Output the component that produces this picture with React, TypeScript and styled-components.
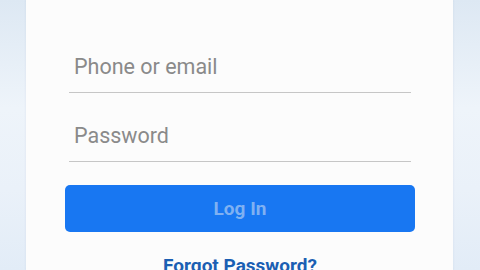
import React from "react";
import styled, {createGlobalStyle} from "styled-components";

const GlobalStyle = createGlobalStyle`
  html, body {
    margin: 0;
    padding: 0;
  }
  body {
    font-family: Roboto, "Liberation Sans", sans-serif;
    overflow: hidden;
  }
`

const PageDiv = styled.div`
  width: 480px;
  height: 270px;
  overflow: hidden;
  background: linear-gradient(180deg, #dde8f3 0%, #eef4fa 40%, #eaf1f9 70%, #e2ecf7 100%);
  display: flex;
`

const CardDiv = styled.div`
  margin-left: 26px;
  width: 427px;
  height: 100%;
  background: #fcfcfc;
  box-shadow: 0 0 2px rgba(120, 140, 170, 0.18);
  display: flex;
  flex-direction: column;
  padding: 24px 42px 0 43px;
  box-sizing: border-box;
`

const InputField = styled.input`
  display: block;
  width: 100%;
  box-sizing: border-box;
  border: none;
  border-bottom: 1px solid #c6c6c6;
  background: transparent;
  outline: none;
  padding: 30px 0 14px 5px;
  height: 69px;
  font-family: Roboto, "Liberation Sans", sans-serif;
  font-size: 21.5px;
  line-height: 24px;
  color: #333;

  &::placeholder {
    color: #8a8a8a;
  }
`

const LoginButton = styled.button`
  margin: 23px -4px 0 -4px;
  height: 47px;
  border: none;
  border-radius: 5px;
  background: #1877f2;
  color: #7fb1f2;
  font-family: Roboto, "Liberation Sans", sans-serif;
  font-weight: 700;
  font-size: 19px;
  line-height: 47px;
  padding: 0;
  cursor: default;
`

const ForgotLink = styled.a`
  margin-top: 23px;
  text-align: center;
  font-family: Roboto, "Liberation Sans", sans-serif;
  font-weight: 700;
  font-size: 19px;
  line-height: 22px;
  color: #1b5fb3;
  text-decoration: none;
`

const App = () => {
    return (
        <>
            <GlobalStyle/>
            <PageDiv>
                <CardDiv>
                    <InputField type="text" placeholder="Phone or email"/>
                    <InputField type="password" placeholder="Password"/>
                    <LoginButton disabled>Log In</LoginButton>
                    <ForgotLink href="#">Forgot Password?</ForgotLink>
                </CardDiv>
            </PageDiv>
        </>
    )
}

export default App
